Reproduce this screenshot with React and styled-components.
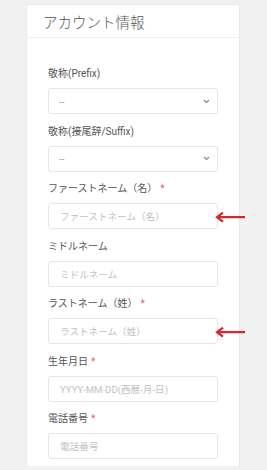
import React from 'react';
import styled, { createGlobalStyle } from 'styled-components';

const GlobalStyle = createGlobalStyle`
  html, body {
    margin: 0;
    padding: 0;
    background: #f1f1f1;
    font-family: Roboto, "Noto Sans CJK JP", sans-serif;
    overflow: hidden;
  }
`;

const Page = styled.div`
  padding: 4px 27px 0 26px;
  height: 466px;
  box-sizing: border-box;
`;

const Card = styled.div`
  background: #fff;
  border: 1px solid #e9e9e9;
  border-bottom: none;
  height: 100%;
  box-sizing: border-box;
  overflow: visible;
`;

const Header = styled.div`
  height: 32px;
  padding-left: 16px;
  display: flex;
  align-items: center;
  font-size: 14.5px;
  font-weight: 300;
  color: #555;
  border-bottom: 1px solid #eeeeee;
`;

const Body = styled.div`
  padding: 29px 21px 0 21px;
`;

const Field = styled.div`
  margin-bottom: 10.5px;
`;

const Label = styled.div`
  height: 14px;
  line-height: 14px;
  font-size: 10px;
  color: #555;
  margin-bottom: 7px;
  white-space: nowrap;
`;

const Star = styled.span`
  color: #e06666;
  margin-left: 3px;
`;

const Box = styled.div`
  position: relative;
  height: 26px;
  box-sizing: border-box;
  border: 1px solid #e6e6e6;
  border-radius: 3px;
  display: flex;
  align-items: center;
  padding: 0 ${p => (p.select ? '10px' : '11px')};
  font-size: 9.6px;
  color: ${p => (p.select ? '#999' : '#c2c2c2')};
  white-space: nowrap;
`;

const Chevron = styled.svg`
  margin-left: auto;
  margin-right: -3px;
`;

const Arrow = styled.svg`
  position: absolute;
  left: calc(100% - 3px);
  top: 50%;
  transform: translateY(-40%);
`;

const RedArrow = () => (
  <Arrow width="32" height="12" viewBox="0 0 32 12">
    <path d="M31 6H4" stroke="#d8262c" strokeWidth="2.2" fill="none" />
    <path d="M9 1.5L3 6l6 4.5" stroke="#d8262c" strokeWidth="2.2" fill="none" strokeLinejoin="miter" />
  </Arrow>
);

const fields = [
  { label: '敬称(Prefix)', select: true, value: '--' },
  { label: '敬称(接尾辞/Suffix)', select: true, value: '--' },
  { label: 'ファーストネーム（名）', req: true, value: 'ファーストネーム（名）', arrow: true },
  { label: 'ミドルネーム', value: 'ミドルネーム' },
  { label: 'ラストネーム（姓）', req: true, value: 'ラストネーム（姓）', arrow: true },
  { label: '生年月日', req: true, value: 'YYYY-MM-DD(西暦-月-日)' },
  { label: '電話番号', req: true, value: '電話番号' },
];

export default function App() {
  return (
    <Page>
      <GlobalStyle />
      <Card>
        <Header>アカウント情報</Header>
        <Body>
          {fields.map(f => (
            <Field key={f.label}>
              <Label>
                {f.label}
                {f.req && <Star>*</Star>}
              </Label>
              <Box select={f.select ? 1 : 0}>
                {f.value}
                {f.select && (
                  <Chevron width="7" height="5" viewBox="0 0 7 5">
                    <path d="M1 1l2.5 2.5L6 1" stroke="#888" strokeWidth="1.1" fill="none" />
                  </Chevron>
                )}
                {f.arrow && <RedArrow />}
              </Box>
            </Field>
          ))}
        </Body>
      </Card>
    </Page>
  );
}
